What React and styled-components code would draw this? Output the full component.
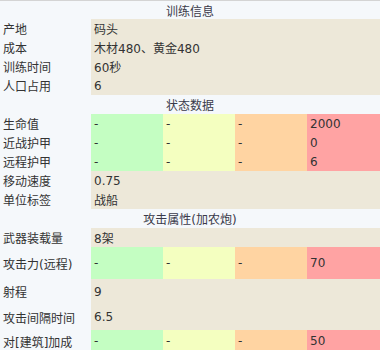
import React from "react";
import styled, { createGlobalStyle } from "styled-components";

const Global = createGlobalStyle`
  html, body {
    margin: 0;
    padding: 0;
    background: #f5f8fb;
  }
`;

const Tabla = styled.div`
  width: 380px;
  height: 350px;
  overflow: hidden;
  background: #f5f8fb;
  border-top: 1px solid #d4d4d4;
  box-sizing: border-box;
  font-family: "DejaVu Sans", "Noto Sans CJK SC", sans-serif;
  font-size: 12px;
  color: #333;
`;

const Fila = styled.div`
  display: grid;
  grid-template-columns: 91px 72px 72px 72px 1fr;
  height: ${(p) => p.$alto || 19}px;
`;

const Encabezado = styled.div`
  height: ${(p) => p.$alto || 19}px;
  display: flex;
  align-items: center;
  justify-content: center;
  color: #3a3a4a;
`;

const Etiqueta = styled.div`
  display: flex;
  align-items: center;
  padding-left: 3px;
  white-space: nowrap;
`;

const colores = {
  verde: "#c4fec2",
  amarillo: "#f4ffc0",
  naranja: "#ffd4a2",
  rojo: "#ffa3a3",
};

const Celda = styled.div`
  display: flex;
  align-items: center;
  padding-left: 3px;
  white-space: nowrap;
  background: ${(p) => colores[p.$color] || "#ede8d9"};
  grid-column: ${(p) => (p.$ancho ? "2 / 6" : "auto")};
`;

const FilaSimple = ({ etiqueta, valor, alto }) => (
  <Fila $alto={alto}>
    <Etiqueta>{etiqueta}</Etiqueta>
    <Celda $ancho>{valor}</Celda>
  </Fila>
);

const FilaColor = ({ etiqueta, valores, alto }) => (
  <Fila $alto={alto}>
    <Etiqueta>{etiqueta}</Etiqueta>
    <Celda $color="verde">{valores[0]}</Celda>
    <Celda $color="amarillo">{valores[1]}</Celda>
    <Celda $color="naranja">{valores[2]}</Celda>
    <Celda $color="rojo">{valores[3]}</Celda>
  </Fila>
);

export default function App() {
  return (
    <>
      <Global />
      <Tabla>
        <Encabezado $alto={18}>训练信息</Encabezado>
        <FilaSimple etiqueta="产地" valor="码头" />
        <FilaSimple etiqueta="成本" valor="木材480、黄金480" />
        <FilaSimple etiqueta="训练时间" valor="60秒" />
        <FilaSimple etiqueta="人口占用" valor="6" />
        <Encabezado>状态数据</Encabezado>
        <FilaColor etiqueta="生命值" valores={["-", "-", "-", "2000"]} />
        <FilaColor etiqueta="近战护甲" valores={["-", "-", "-", "0"]} />
        <FilaColor etiqueta="远程护甲" valores={["-", "-", "-", "6"]} />
        <FilaSimple etiqueta="移动速度" valor="0.75" />
        <FilaSimple etiqueta="单位标签" valor="战船" />
        <Encabezado>攻击属性(加农炮)</Encabezado>
        <FilaSimple etiqueta="武器装载量" valor="8架" />
        <FilaColor etiqueta="攻击力(远程)" valores={["-", "-", "-", "70"]} alto={32} />
        <FilaSimple etiqueta="射程" valor="9" alto={25} />
        <FilaSimple etiqueta="攻击间隔时间" valor="6.5" alto={26} />
        <FilaColor etiqueta="对[建筑]加成" valores={["-", "-", "-", "50"]} alto={22} />
      </Tabla>
    </>
  );
}
